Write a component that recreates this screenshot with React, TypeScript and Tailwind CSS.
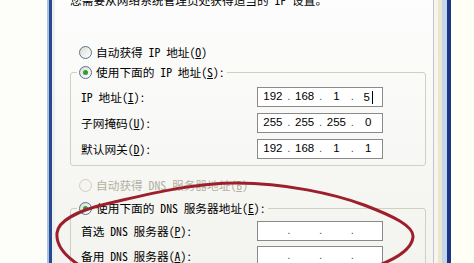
import React from 'react';

const cjk = "font-['Noto_Sans_Mono_CJK_SC','Noto_Sans_CJK_SC',sans-serif]";

const Radio: React.FC<{ checked?: boolean; disabled?: boolean }> = ({ checked, disabled }) => (
  <span
    className={
      'w-[13px] h-[13px] rounded-full border flex items-center justify-center shrink-0 ' +
      (disabled
        ? 'border-[#cfcdc2] bg-[#f6f5f0]'
        : 'border-[#56748f] bg-gradient-to-br from-[#dcdcd6] to-white')
    }
  >
    {checked && <span className="w-[5px] h-[5px] rounded-full bg-[#2aa02a]" />}
  </span>
);

const IpBox: React.FC<{ parts?: string[]; cursor?: boolean }> = ({ parts, cursor }) => {
  const segs = parts ?? ['', '', '', ''];
  return (
    <div className="w-[126px] h-[20px] border border-[#8a8a8a] bg-white flex items-center pl-[1px] font-['Liberation_Sans',sans-serif] text-[11.5px] text-black leading-none">
      {segs.map((s, i) => (
        <React.Fragment key={i}>
          <span className="w-[28px] text-center">
            {s}
            {cursor && i === 3 && <span className="inline-block w-[1px] h-[13px] bg-black ml-[2px] align-middle" />}
          </span>
          {i < 3 && <span className="w-[4px] text-center text-[#555]">.</span>}
        </React.Fragment>
      ))}
    </div>
  );
};

const Row: React.FC<{ label: React.ReactNode; box: React.ReactNode }> = ({ label, box }) => (
  <div className="flex items-center h-[20px]">
    <div className="w-[176px] text-[11.7px] text-black">{label}</div>
    {box}
  </div>
);

const App: React.FC = () => {
  return (
    <div className={`relative w-[474px] h-[263px] overflow-hidden flex bg-white ${cjk}`}>
      <div className="w-[47px] bg-[#fdfdf9]" />
      <div className="w-[2px] bg-[#a8c3e6]" />
      <div className="w-[3px] bg-[#27498f]" />
      <div className="w-[3px] bg-[#eef0f0]" />

      {/* tab panel */}
      <div className="w-[378px] bg-gradient-to-b from-[#fdfdfd] to-[#f3f3ef] flex flex-col pl-[15px] pr-[7px] text-[11.7px] text-black">
        <div className="mt-[-7px] h-[14px] leading-[14px] whitespace-nowrap">您需要从网络系统管理员处获得适当的 IP 设置。</div>

        <div className="mt-[37px] h-[16px] flex items-center pl-[9px] gap-[4px] whitespace-nowrap">
          <Radio />
          <span>自动获得 IP 地址(<u>O</u>)</span>
        </div>

        <fieldset className="mt-[4px] border border-[#d0d0bf] rounded-[3px] pl-[10px] pt-[7px] pb-[6px]">
          <legend className="ml-[-4px] px-[2px]">
            <div className="h-[16px] flex items-center gap-[4px] whitespace-nowrap">
              <Radio checked />
              <span>使用下面的 IP 地址(<u>S</u>):</span>
            </div>
          </legend>
          <div className="flex flex-col gap-[6px]">
            <Row label={<>IP 地址(<u>I</u>):</>} box={<IpBox parts={['192', '168', '1', '5']} cursor />} />
            <Row label={<>子网掩码(<u>U</u>):</>} box={<IpBox parts={['255', '255', '255', '0']} />} />
            <Row label={<>默认网关(<u>D</u>):</>} box={<IpBox parts={['192', '168', '1', '1']} />} />
          </div>
        </fieldset>

        <div className="mt-[11px] h-[16px] flex items-center pl-[9px] gap-[4px] whitespace-nowrap text-[#b3b0a2]">
          <Radio disabled />
          <span>自动获得 DNS 服务器地址(<u>B</u>)</span>
        </div>

        <fieldset className="mt-[7px] border border-[#d0d0bf] rounded-[3px] pl-[10px] pt-[5px] pb-[6px]">
          <legend className="ml-[-4px] px-[2px]">
            <div className="h-[16px] flex items-center gap-[4px] whitespace-nowrap">
              <Radio checked />
              <span>使用下面的 DNS 服务器地址(<u>E</u>):</span>
            </div>
          </legend>
          <div className="flex flex-col gap-[5px]">
            <Row label={<>首选 DNS 服务器(<u>P</u>):</>} box={<IpBox />} />
            <Row label={<>备用 DNS 服务器(<u>A</u>):</>} box={<IpBox />} />
          </div>
        </fieldset>
      </div>

      <div className="w-[1px] bg-[#c6c3cf]" />
      <div className="w-[4px] bg-[#f6f5ef]" />
      <div className="w-[4px] bg-[#e9e7cc]" />
      <div className="w-[5px] bg-[#c2d6ee]" />
      <div className="w-[4px] bg-[#1c3585]" />
      <div className="flex-1 bg-[#fffff6]" />

      {/* hand-drawn red ellipse annotation */}
      <svg className="absolute inset-0 pointer-events-none" width="474" height="263" viewBox="0 0 474 263">
        <path
          d="M 84 268 C 63 256, 56 244, 57 233 C 58 222, 75 211, 110 203 C 145 195, 190 183, 237 183 C 284 183, 335 194, 364 205 C 393 216, 414 226, 413 237 C 412 248, 398 258, 377 266"
          fill="none"
          stroke="#9e1f2c"
          strokeWidth="3"
          strokeLinecap="round"
        />
      </svg>
    </div>
  );
};

export default App;
